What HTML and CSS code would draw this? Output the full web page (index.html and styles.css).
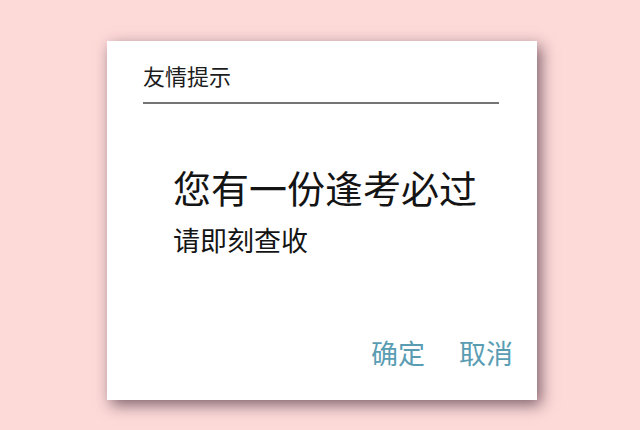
FILE: index.html
```html
<!DOCTYPE html>
<html lang="zh-CN">
<head>
<meta charset="utf-8">
<link rel="stylesheet" href="styles.css">
</head>
<body>
<div class="dialog">
  <div class="title">友情提示</div>
  <div class="rule"></div>
  <div class="message">
    <div class="headline">您有一份逢考必过</div>
    <div class="sub">请即刻查收</div>
  </div>
  <div class="actions">
    <span class="btn">确定</span>
    <span class="btn">取消</span>
  </div>
</div>
</body>
</html>
```
FILE: styles.css
```css
html, body {
  margin: 0;
  padding: 0;
}
body {
  width: 640px;
  height: 430px;
  background: #fdd9d8;
  font-family: "Noto Sans CJK SC", "Noto Sans", sans-serif;
  overflow: hidden;
  padding-top: 41px;
  box-sizing: border-box;
}
.dialog {
  margin-left: 107px;
  width: 430px;
  height: 359px;
  background: #ffffff;
  box-shadow: 4px 5px 14px rgba(60, 35, 50, 0.65);
  display: flex;
  flex-direction: column;
  box-sizing: border-box;
  padding: 23px 24px 0 36px;
}
.title {
  font-size: 22px;
  line-height: 22px;
  color: #1c1c1c;
}
.rule {
  margin-top: 16px;
  height: 2px;
  background: #747474;
  width: 356px;
}
.message {
  padding-left: 30px;
  margin-top: 64px;
  color: #141414;
}
.headline {
  font-size: 38px;
  line-height: 38px;
}
.sub {
  margin-top: 20px;
  font-size: 27px;
  line-height: 27px;
}
.actions {
  margin-top: 86px;
  display: flex;
  justify-content: flex-end;
  gap: 34px;
}
.btn {
  font-size: 27px;
  line-height: 27px;
  color: #5a9db3;
}
```
